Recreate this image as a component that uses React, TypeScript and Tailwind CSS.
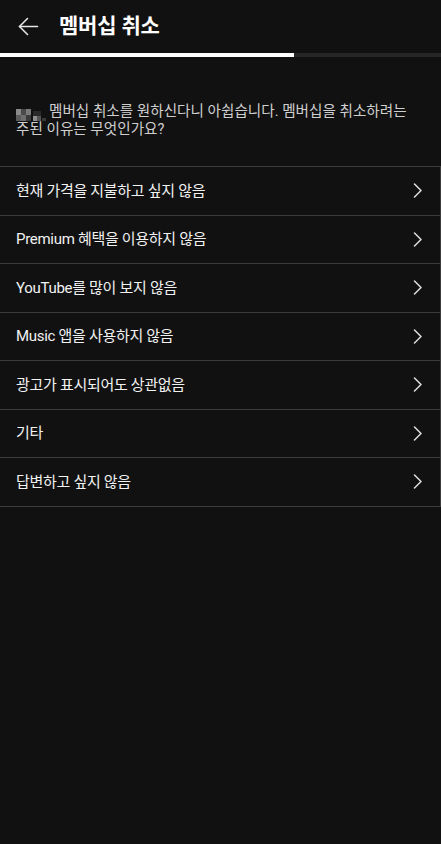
import React from 'react';

const reasons = [
  '현재 가격을 지불하고 싶지 않음',
  'Premium 혜택을 이용하지 않음',
  'YouTube를 많이 보지 않음',
  'Music 앱을 사용하지 않음',
  '광고가 표시되어도 상관없음',
  '기타',
  '답변하고 싶지 않음',
];

const BackArrow = () => (
  <svg width="21" height="19" viewBox="0 0 21 19" fill="none" stroke="#e5e5e5" strokeWidth="1.6" strokeLinecap="round" strokeLinejoin="round">
    <path d="M1.5 9.5H19.5" />
    <path d="M9.5 1.5L1.5 9.5L9.5 17.5" />
  </svg>
);

const Chevron = () => (
  <svg width="10" height="15" viewBox="0 0 10 15" fill="none" stroke="#e0e0e0" strokeWidth="1.5" strokeLinecap="round" strokeLinejoin="round">
    <path d="M1.5 1L8 7.5L1.5 14" />
  </svg>
);

// blurred (mosaic) user name
const Mosaic = () => (
  <span className="inline-flex items-end align-[1px] mr-[3px] h-[12px]">
    <span className="flex flex-col">
      <span className="flex">
        <span className="w-[5px] h-[6px] bg-[#8a8a8a]" />
        <span className="w-[5px] h-[6px] bg-[#4a4a4a]" />
        <span className="w-[5px] h-[6px] bg-[#7a7a7a]" />
      </span>
      <span className="flex">
        <span className="w-[5px] h-[6px] bg-[#5c5c5c]" />
        <span className="w-[5px] h-[6px] bg-[#6e6e6e]" />
        <span className="w-[5px] h-[6px] bg-[#3a3a3a]" />
      </span>
    </span>
    <span className="flex flex-col ml-[2px]">
      <span className="flex">
        <span className="w-[4px] h-[5px] bg-[#2a2a2a]" />
        <span className="w-[4px] h-[5px] bg-[#2a2a2a]" />
      </span>
      <span className="flex">
        <span className="w-[4px] h-[5px] bg-[#8d8d8d]" />
        <span className="w-[4px] h-[5px] bg-[#555]" />
      </span>
    </span>
    <span className="w-[4px] h-[3px] bg-[#3a3a3a] ml-[1px]" />
  </span>
);

export default function App() {
  return (
    <div
      className="w-[441px] h-[844px] bg-[#111111] text-white overflow-hidden"
      style={{ fontFamily: 'Roboto, "Noto Sans CJK KR", sans-serif' }}
    >
      <header className="h-[53px] flex items-center pl-[18px]">
        <span className="w-[41px] shrink-0 flex items-center">
          <BackArrow />
        </span>
        <h1 className="text-[21px] font-bold tracking-[-0.2px] text-white">멤버십 취소</h1>
      </header>

      <div className="h-[4px] bg-[#262626]">
        <div className="h-full w-2/3 bg-white" />
      </div>

      <p className="px-4 pt-[46px] pb-[28px] text-[14.6px] leading-[17px] text-[#cfcfcf] whitespace-nowrap">
        <Mosaic />
        멤버십 취소를 원하신다니 아쉽습니다. 멤버십을 취소하려는
        <br />
        주된 이유는 무엇인가요?
      </p>

      <ul className="border-t border-r border-[#3c3c3c]">
        {reasons.map((r) => (
          <li
            key={r}
            className="h-[48.5px] flex items-center justify-between border-b border-[#3c3c3c] pl-4 pr-[17px]"
          >
            <span className="text-[15px] tracking-[-0.3px] text-[#f1f1f1]">{r}</span>
            <Chevron />
          </li>
        ))}
      </ul>
    </div>
  );
}
